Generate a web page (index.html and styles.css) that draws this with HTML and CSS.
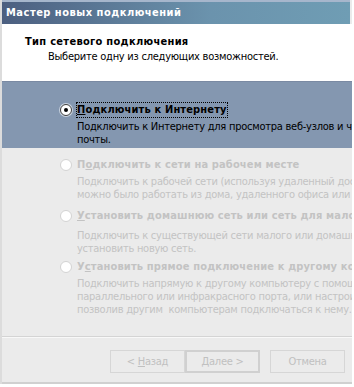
FILE: index.html
```html
<!DOCTYPE html>
<html lang="ru">
<head>
<meta charset="utf-8">
<link rel="stylesheet" href="styles.css">
</head>
<body>
<div class="window">
  <div class="titlebar">Мастер новых подключений</div>
  <div class="header">
    <div class="h-title">Тип сетевого подключения</div>
    <div class="h-sub">Выберите одну из следующих возможностей.</div>
  </div>
  <div class="band">
    <div class="option active">
      <span class="radio checked"></span>
      <span class="label focus"><u>П</u>одключить к Интернету</span>
      <div class="desc">Подключить к Интернету для просмотра веб-узлов и чтения электронной<br>почты.</div>
    </div>
  </div>
  <div class="rest">
    <div class="option">
      <span class="radio"></span>
      <span class="label">П<u>о</u>дключить к сети на рабочем месте</span>
      <div class="desc">Подключить к рабочей сети (используя удаленный доступ или VPN), чтобы<br>можно было работать из дома, удаленного офиса или другого места.</div>
    </div>
    <div class="option home">
      <span class="radio"></span>
      <span class="label"><u>У</u>становить домашнюю сеть или сеть для малого офиса</span>
      <div class="desc">Подключить к существующей сети малого или домашнего офиса или<br>установить новую сеть.</div>
    </div>
    <div class="option direct">
      <span class="radio"></span>
      <span class="label">У<u>с</u>тановить прямое подключение к другому компьютеру</span>
      <div class="desc">Подключить напрямую к другому компьютеру с помощью последовательного,<br>параллельного или инфракрасного порта, или настроить этот компьютер,<br>позволив другим&nbsp; компьютерам подключаться к нему.</div>
    </div>
  </div>
  <div class="footer">
    <button class="btn">&lt; <u>Н</u>азад</button>
    <button class="btn default"><u>Д</u>алее &gt;</button>
    <button class="btn cancel">Отмена</button>
  </div>
</div>
</body>
</html>
```
FILE: styles.css
```css
html, body {
  margin: 0;
  padding: 0;
  background: #ffffff;
}
body {
  font-family: "DejaVu Sans Condensed", "DejaVu Sans", sans-serif;
  font-stretch: condensed;
  font-size: 11px;
  letter-spacing: -0.25px;
  width: 354px;
  height: 387px;
  overflow: hidden;
}
.window {
  width: 352px;
  background: #ebebeb;
  border-left: 2px solid #dcdcdc;
  box-sizing: border-box;
  overflow: hidden;
}
.titlebar {
  height: 22px;
  margin-right: 2px;
  border-top: 2px solid #a6b6cc;
  background: linear-gradient(to right, #4c5f80, #6b93ad 60%, #6f9db4);
  color: #ffffff;
  font-weight: bold;
  letter-spacing: 0.5px;
  line-height: 22px;
  padding-left: 4px;
  white-space: nowrap;
}
.header {
  background: #ffffff;
  height: 58px;
  box-sizing: border-box;
  padding-top: 11px;
  border-bottom: 1px solid #7a8aa3;
  white-space: nowrap;
}
.h-title {
  font-weight: bold;
  letter-spacing: 0.3px;
  line-height: 14px;
  padding-left: 23px;
  color: #000;
}
.h-sub {
  line-height: 14px;
  margin-top: 1px;
  padding-left: 46px;
  color: #000;
}
.band {
  background: #8497b0;
  height: 66px;
  box-sizing: border-box;
  padding-top: 20px;
}
.rest {
  padding-top: 9px;
  height: 188px;
  box-sizing: border-box;
  display: flex;
  flex-direction: column;
  gap: 7px;
}
.option {
  display: grid;
  grid-template-columns: 12px auto;
  column-gap: 4px;
  padding-left: 58px;
  white-space: nowrap;
  color: #c3c3c3;
}
.option.active {
  color: #000;
}
.option.home .desc {
  margin-top: 5px;
}
.option.direct {
  margin-top: -3px;
}
.radio {
  width: 12px;
  height: 12px;
  align-self: center;
  box-sizing: border-box;
  border-radius: 50%;
  background: #ffffff;
  border: 1px solid #d3d3d3;
  position: relative;
}
.radio.checked {
  border: 1px solid #404040;
  box-shadow: 0 0 0 1px #c8d2de;
}
.radio.checked::after {
  content: "";
  position: absolute;
  left: 3px;
  top: 3px;
  width: 4px;
  height: 4px;
  border-radius: 50%;
  background: #000;
}
.label {
  font-weight: bold;
  letter-spacing: 0.15px;
  line-height: 14px;
  border: 1px solid transparent;
  justify-self: start;
}
.label.focus {
  border: 1px dotted #000;
}
.desc {
  grid-column: 2;
  line-height: 13px;
  margin-top: 2px;
  padding-left: 1px;
}
.footer {
  height: 48px;
  box-sizing: border-box;
  border-top: 1px solid #d4d4d4;
  box-shadow: inset 0 1px 0 #f8f8f8;
  border-bottom: 2px solid #d0d0d0;
  display: flex;
  justify-content: flex-end;
  align-items: flex-start;
  padding: 13px 7px 0 0;
}
.btn {
  font-family: inherit;
  font-stretch: condensed;
  font-size: 11px;
  letter-spacing: -0.25px;
  width: 75px;
  height: 23px;
  background: #ebebeb;
  color: #c0c0c0;
  border: 1px solid #d6d6d6;
  padding: 0;
  margin: 0;
}
.btn.default {
  border: 2px solid #d0d0d0;
}
.btn.cancel {
  margin-left: 10px;
}
```
